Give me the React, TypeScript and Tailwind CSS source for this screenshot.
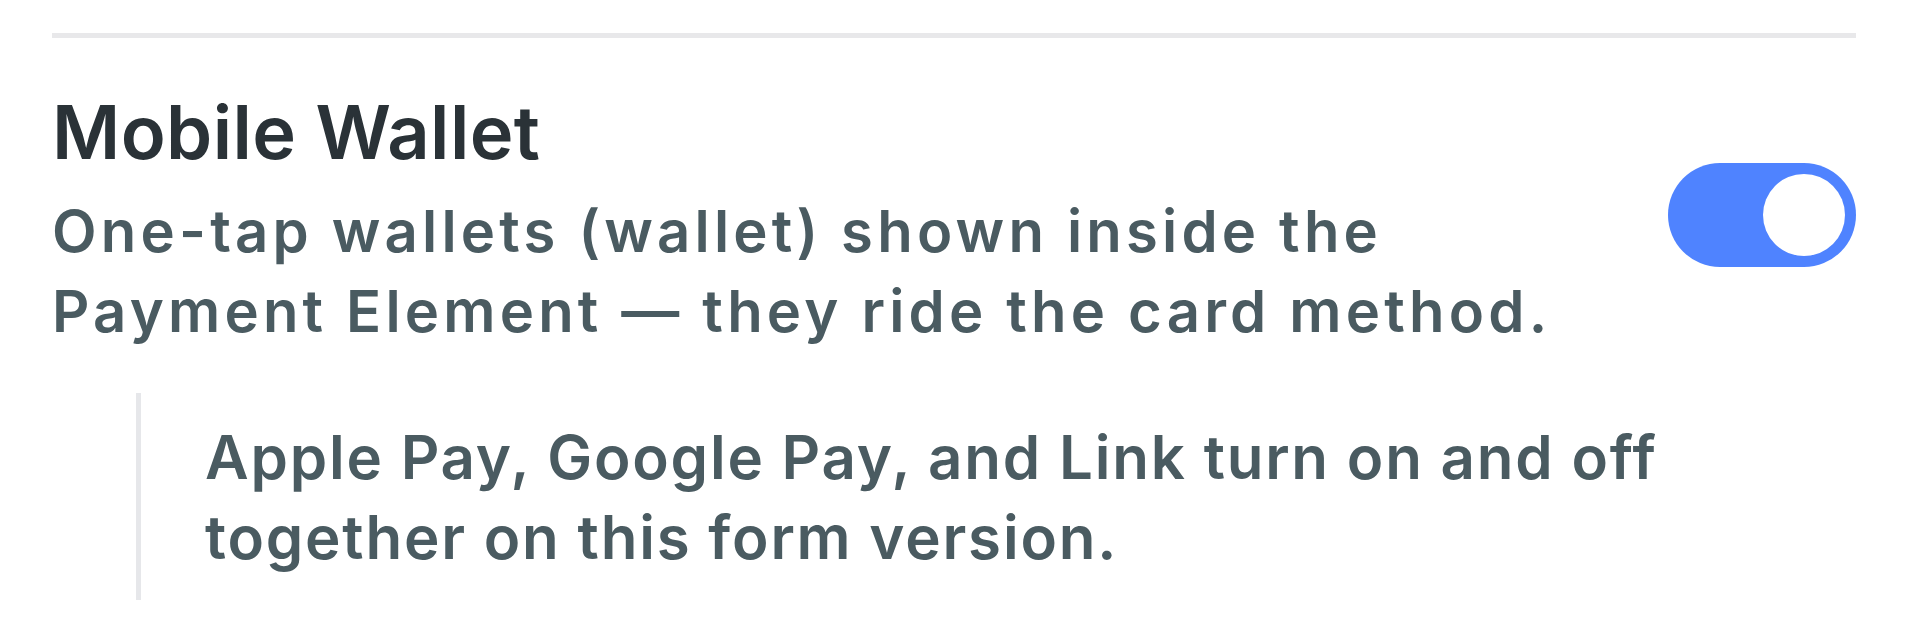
import { useState } from "react";

const Toggle = ({ on, onChange }: { on: boolean; onChange: () => void }) => {
  return (
    <button
      type="button"
      role="switch"
      aria-checked={on}
      onClick={onChange}
      className={`mt-[71px] flex h-[104px] w-[188px] shrink-0 items-center rounded-full p-[11px] ${on ? "justify-end bg-[#4f83ff]" : "justify-start bg-[#d6d9de]"}`}
    >
      <span className="block h-[82px] w-[82px] rounded-full bg-white" />
    </button>
  );
};

const App = () => {
  const [walletOn, setWalletOn] = useState(true);

  return (
    <div className="min-h-screen bg-white px-[52px] pt-[33px] font-['Inter',sans-serif]">
      <div className="border-t-[5px] border-[#e8e8ea]">

        {/* Wallet row */}
        <div className="mt-[54px] flex items-start justify-between">
          <div>
            <h2 className="text-[74px] leading-[80px] font-semibold tracking-[0.4px] text-[#2a3237]">Mobile Wallet</h2>
            <p className="mt-[19px] w-[1580px] text-[58px] leading-[80px] font-semibold tracking-[4.2px] text-[#4a5b61]">
              One-tap wallets (wallet) shown inside the
              <br />
              Payment Element — they ride the card method.
            </p>
          </div>
          <Toggle on={walletOn} onChange={() => setWalletOn(prev => !prev)} />
        </div>

        {/* Note */}
        <div className="mt-[42px] ml-[84px] border-l-[5px] border-[#e6e7ea] pt-[24px] pb-[23px] pl-[64px]">
          <p className="text-[60px] leading-[80px] font-semibold tracking-[1.8px] text-[#4a5b61]">
            Apple Pay, Google Pay, and Link turn on and off
            <br />
            together on this form version.
          </p>
        </div>

      </div>
    </div>
  );
}

export default App;
